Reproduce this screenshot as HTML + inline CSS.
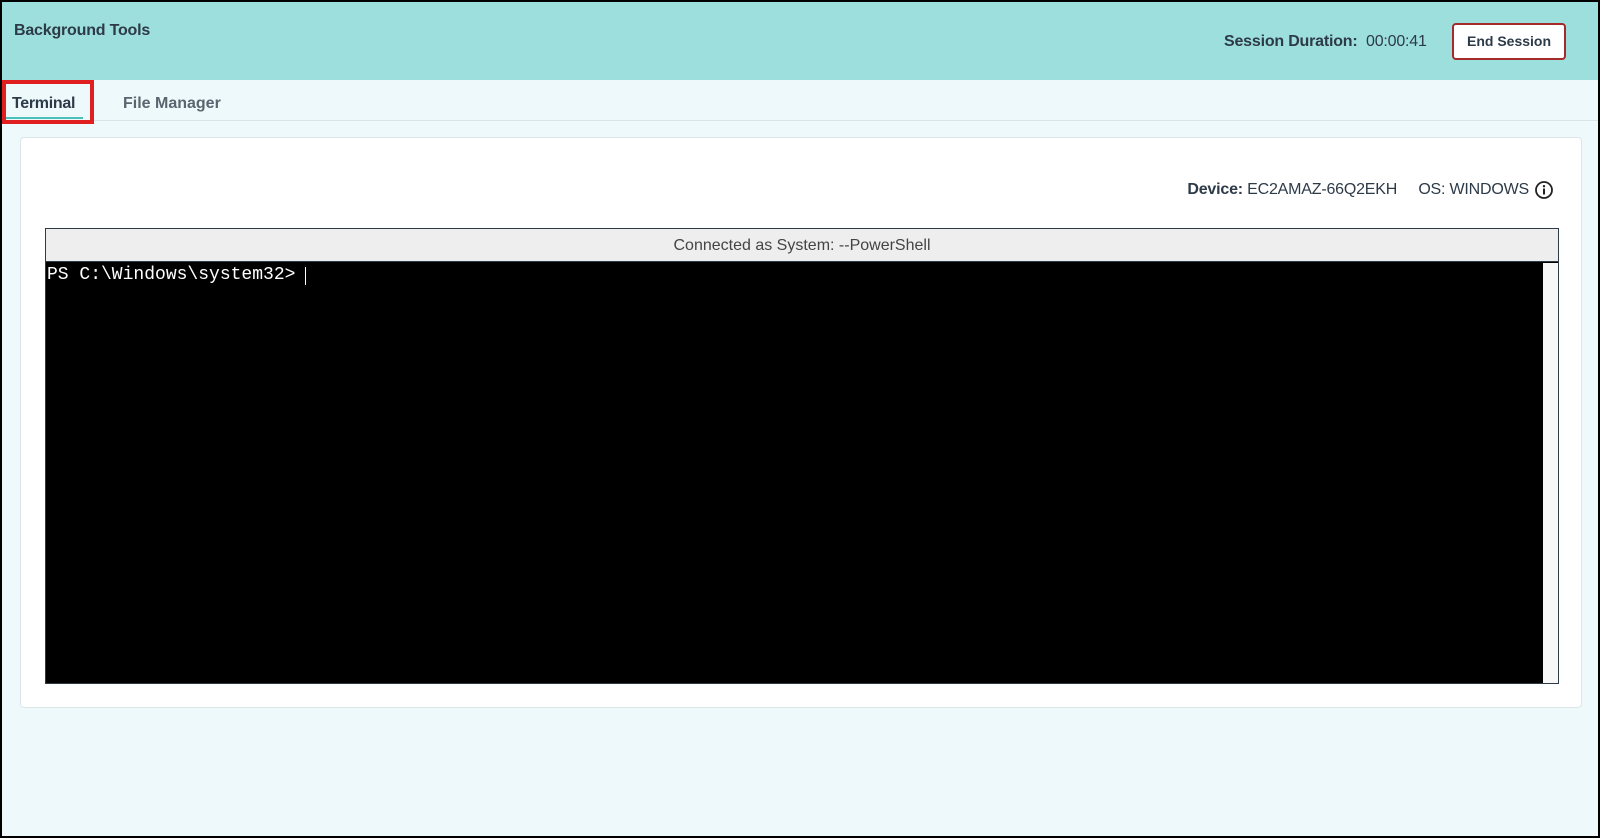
<!DOCTYPE html>
<html><head><meta charset="utf-8"><style>
*{box-sizing:border-box;margin:0;padding:0}
body{width:1600px;height:838px;overflow:hidden;background:#000;font-family:"Liberation Sans",sans-serif;}
.frame{position:absolute;left:2px;top:2px;width:1596px;height:834px;background:#eef9fb;}
.hdr{position:absolute;left:0;top:0;width:1596px;height:78px;background:#9ddfdc;}
.title{position:absolute;left:12px;top:20px;font-size:16px;font-weight:bold;color:#2d3a48;letter-spacing:-0.2px;}
.dur{position:absolute;left:1222px;top:31px;font-size:16px;color:#2d3a48;letter-spacing:-0.2px;}
.dur b{font-weight:bold}
.btn{position:absolute;left:1450px;top:21px;width:114px;height:37px;background:#fff;border:2px solid #a52a2a;border-radius:4px;font-size:14px;font-weight:bold;color:#2d3a48;text-align:center;line-height:33px;}
.tabs{position:absolute;left:0;top:78px;width:1596px;height:41px;border-bottom:1px solid #d8e4e6;}
.tab1{position:absolute;left:0;top:0;width:92px;height:44px;border:4px solid #e02020;}
.t1{position:absolute;left:10px;top:15px;font-size:16px;font-weight:bold;color:#2d3a48;letter-spacing:-0.3px;}
.ul{position:absolute;left:4px;top:37px;width:77px;height:2px;background:#4bbfba;}
.t2{position:absolute;left:121px;top:15px;font-size:16px;font-weight:bold;color:#5a6570;}
.card{position:absolute;left:18px;top:135px;width:1562px;height:571px;background:#fff;border:1px solid #dde5e8;border-radius:4px;}
.dev{position:absolute;right:52px;top:43px;font-size:16px;color:#2d3a48;white-space:nowrap;letter-spacing:-0.2px;}
.info{position:absolute;left:1513px;top:42px;}
.term{position:absolute;left:24px;top:90px;width:1514px;height:456px;border:1px solid #2d3a48;background:#000;}
.tbar{position:absolute;left:0;top:0;width:1512px;height:33px;background:#eeeeee;border-bottom:1px solid #2d3a48;text-align:center;font-size:16px;color:#444;line-height:33px;}
.sb{position:absolute;right:0;top:34px;width:15px;height:420px;background:#f7f7f7;}
.pr{position:absolute;left:1px;top:36px;font-family:"Liberation Mono",monospace;font-size:18px;color:#fff;white-space:pre;}
.cur{position:absolute;left:259px;top:38px;width:1px;height:18px;background:#fff;}
</style></head><body>
<div class="frame">
 <div class="hdr">
  <div class="title">Background Tools</div>
  <div class="dur"><b>Session Duration:</b>&nbsp; 00:00:41</div>
  <div class="btn">End Session</div>
 </div>
 <div class="tabs">
  <div class="tab1"></div>
  <div class="t1">Terminal</div>
  <div class="ul"></div>
  <div class="t2">File Manager</div>
 </div>
 <div class="card">
  <div class="dev"><b>Device:</b> EC2AMAZ-66Q2EKH &nbsp;&nbsp;&nbsp; OS: WINDOWS</div>
  <svg class="info" width="20" height="20" viewBox="0 0 20 20"><circle cx="10" cy="10" r="8" fill="none" stroke="#222" stroke-width="1.8"/><circle cx="10" cy="6.2" r="1.2" fill="#222"/><rect x="9" y="8.5" width="2" height="6" fill="#222"/></svg>
  <div class="term">
   <div class="tbar">Connected as System: --PowerShell</div>
   <div class="sb"></div>
   <div class="pr">PS C:\Windows\system32&gt;</div>
   <div class="cur"></div>
  </div>
 </div>
</div>
</body></html>
